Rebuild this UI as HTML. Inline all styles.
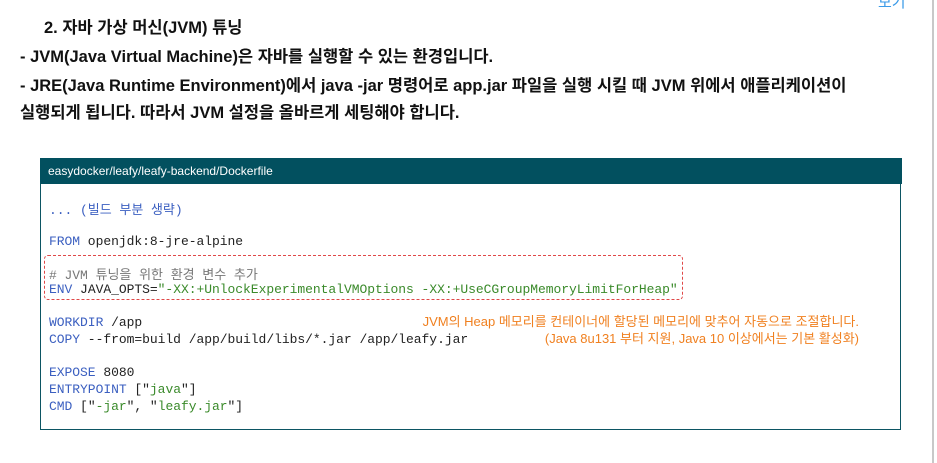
<!DOCTYPE html>
<html><head><meta charset="utf-8"><style>
body{margin:0;width:937px;height:463px;background:#fff;position:relative;overflow:hidden;font-family:"Liberation Sans","Noto Sans CJK KR",sans-serif;}
.t{position:absolute;white-space:nowrap;font-weight:bold;font-size:16.5px;color:#111;}
.vline{position:absolute;left:932px;top:0;width:2px;height:463px;background:#c8c8c8;}
.box{position:absolute;left:40px;top:158px;width:861px;height:272px;border:1.5px solid #0c5563;box-sizing:border-box;}
.hdr{position:absolute;left:40px;top:158px;width:862px;height:26px;background:#02505f;color:#fff;font-size:12px;line-height:26px;padding-left:8px;box-sizing:border-box;}
.c{position:absolute;left:49px;font-family:"Liberation Mono","Noto Sans CJK KR",monospace;font-size:13px;white-space:nowrap;color:#222;letter-spacing:-0.04px;}
.k{color:#3b5fc0}.s{color:#3a8a2a}.g{color:#777}
.dash{position:absolute;left:44px;top:255px;width:639px;height:45px;border:1px dashed #e04848;border-radius:4px;box-sizing:border-box;}
.o{position:absolute;right:78px;color:#f08020;font-size:13px;white-space:nowrap;}
</style></head><body>
<div style="position:absolute;left:878px;top:-9px;color:#3a9ae8;font-size:15px;">보기</div>
<div class="vline"></div>
<div class="t" style="left:44px;top:14px;">2. 자바 가상 머신(JVM) 튜닝</div>
<div class="t" style="left:20px;top:43px;">- JVM(Java Virtual Machine)은 자바를 실행할 수 있는 환경입니다.</div>
<div class="t" style="left:20px;top:72px;">- JRE(Java Runtime Environment)에서 java -jar 명령어로 app.jar 파일을 실행 시킬 때 JVM 위에서 애플리케이션이</div>
<div class="t" style="left:20px;top:99px;">실행되게 됩니다. 따라서 JVM 설정을 올바르게 세팅해야 합니다.</div>
<div class="box"></div>
<div class="hdr">easydocker/leafy/leafy-backend/Dockerfile</div>
<div class="c k" style="top:199px;">... (빌드 부분 생략)</div>
<div class="c" style="top:234px;"><span class="k">FROM</span> openjdk:8-jre-alpine</div>
<div class="dash"></div>
<div class="c g" style="top:264px;"># JVM 튜닝을 위한 환경 변수 추가</div>
<div class="c" style="top:282px;"><span class="k">ENV</span> JAVA_OPTS=<span class="s">"-XX:+UnlockExperimentalVMOptions -XX:+UseCGroupMemoryLimitForHeap"</span></div>
<div class="c" style="top:315px;"><span class="k">WORKDIR</span> /app</div>
<div class="c" style="top:332px;"><span class="k">COPY</span> --from=build /app/build/libs/*.jar /app/leafy.jar</div>
<div class="c" style="top:365px;"><span class="k">EXPOSE</span> 8080</div>
<div class="c" style="top:382px;"><span class="k">ENTRYPOINT</span> ["<span class="s">java</span>"]</div>
<div class="c" style="top:399px;"><span class="k">CMD</span> ["<span class="s">-jar</span>", "<span class="s">leafy.jar</span>"]</div>
<div class="o" style="top:311px;">JVM의 Heap 메모리를 컨테이너에 할당된 메모리에 맞추어 자동으로 조절합니다.</div>
<div class="o" style="top:328px;">(Java 8u131 부터 지원, Java 10 이상에서는 기본 활성화)</div>
</body></html>
